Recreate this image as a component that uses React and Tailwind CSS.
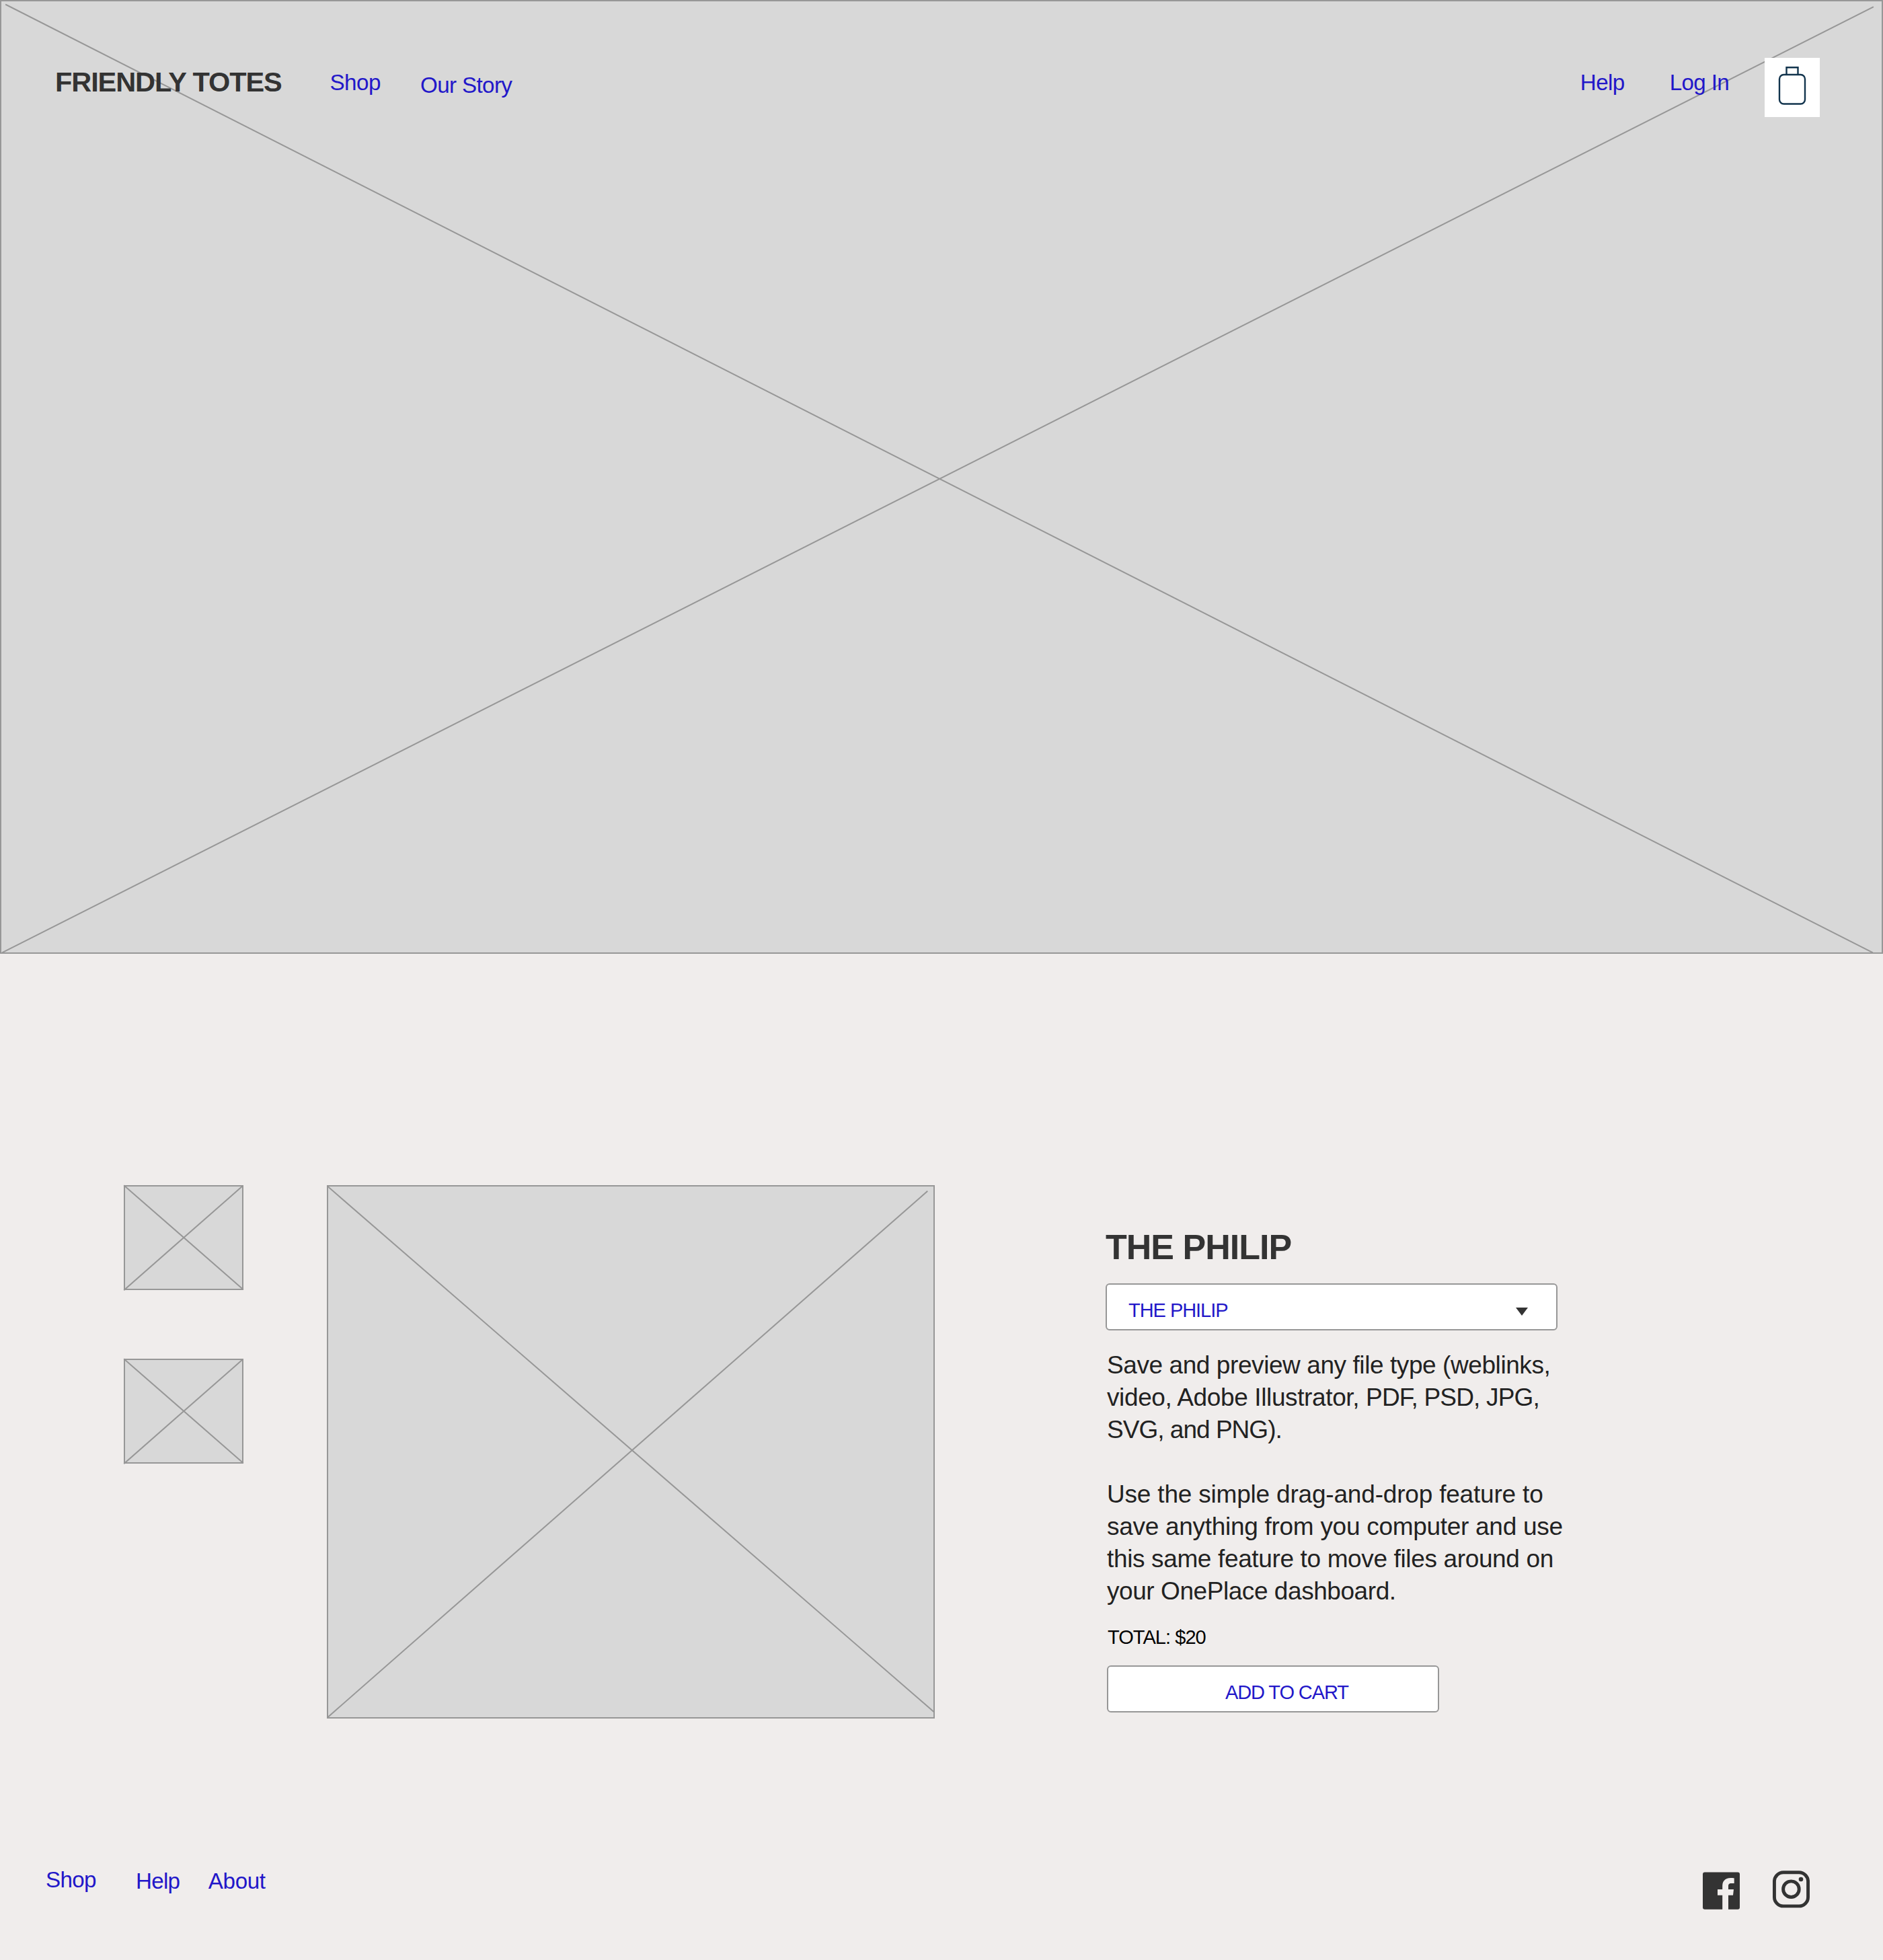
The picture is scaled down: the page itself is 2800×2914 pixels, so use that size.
function Placeholder({ width, height, lines, className }) {
  return (
    <div className={`relative shrink-0 border-2 border-[#979797] bg-[#d8d8d8] ${className}`}>
      <svg
        className="pointer-events-none absolute -left-0.5 -top-0.5 overflow-visible"
        width={width}
        height={height}
        viewBox={`0 0 ${width} ${height}`}
        fill="none"
        stroke="#979797"
        strokeWidth="2"
        strokeLinecap="square"
        aria-hidden="true"
      >
        {lines.map((d) => (
          <path key={d} d={d} />
        ))}
      </svg>
    </div>
  );
}

function NavLink({ children, className }) {
  return (
    <a href="#" className={`block whitespace-nowrap text-[33.2px] leading-10 text-[#2217c9] ${className}`}>
      {children}
    </a>
  );
}

function BagIcon() {
  return (
    <svg width="82" height="88" viewBox="0 0 82 88" fill="none" stroke="#12344d" strokeWidth="2.400" aria-hidden="true">
      <rect x="22" y="25" width="38" height="43.500" rx="6.500" />
      <path d="M32.500 25V14.200h17v10.800" />
    </svg>
  );
}

function FacebookIcon() {
  return (
    <svg width="55" height="56" viewBox="0 0 55 56" fill="#333" aria-hidden="true">
      <path d="M3 .5H52a3 3 0 0 1 3 3V52.700a3 3 0 0 1-3 3H38V34.700h7l1-8.700h-8v-4.500c0-3 1-4.500 4.200-4.500h4.500V9.300C45.500 9.100 43.300 9 41.500 9 34 9 29.200 13.300 29.200 20.500V26H22v8.700h7.200v21H3a3 3 0 0 1-3-3V3.500a3 3 0 0 1 3-3z" />
    </svg>
  );
}

function InstagramIcon() {
  return (
    <svg width="55" height="56" viewBox="0 0 55 56" fill="none" stroke="#333" strokeWidth="4.900" aria-hidden="true">
      <rect x="2.450" y="2.800" width="50.100" height="50.100" rx="13.500" />
      <circle cx="27.400" cy="27.700" r="11.800" />
      <circle cx="42" cy="13" r="3.300" fill="#333" stroke="none" />
    </svg>
  );
}

const thumbLines = ["M1 1 177 154.500", "M1 155.500 176.500 1.500"];

export default function App() {
  return (
    <div className="min-h-[2914px] w-[2800px] overflow-hidden bg-[#f0edec] font-['Liberation_Sans',Arial,sans-serif]">
      <header className="relative h-[1418px]">
        <div className="absolute inset-0">
          <Placeholder
            width={2800}
            height={1418}
            className="h-[1418px] w-[2800px]"
            lines={["M9 7 2784 1416", "M2785 10.500 4 1416"]}
          />
        </div>
        <nav className="relative flex items-start pl-[82px] pr-[94px] pt-[86px]">
          <h1 className="mt-4 whitespace-nowrap text-[41.5px] font-bold leading-10 tracking-[-1.097px] text-[#333]">
            FRIENDLY TOTES
          </h1>
          <NavLink className="ml-[71.7px] mt-[17px] tracking-[-0.527px]">Shop</NavLink>
          <NavLink className="ml-[59.3px] mt-[21px] tracking-[-0.649px]">Our Story</NavLink>
          <NavLink className="ml-auto mt-[17px] tracking-[-0.609px]">Help</NavLink>
          <NavLink className="ml-[67.1px] mt-[17px] tracking-[-0.653px]">Log In</NavLink>
          <button className="ml-[52.9px] h-[88px] w-[82px] shrink-0 bg-white" aria-label="Bag">
            <BagIcon />
          </button>
        </nav>
      </header>

      <main className="flex h-[1137px] items-start pl-[184px] pt-[344px]">
        <div className="flex flex-col gap-[102px]">
          <Placeholder width={178} height={156} className="h-[156px] w-[178px]" lines={thumbLines} />
          <Placeholder width={178} height={156} className="h-[156px] w-[178px]" lines={thumbLines} />
        </div>
        <Placeholder
          width={904}
          height={793}
          className="ml-[124px] h-[793px] w-[904px]"
          lines={["M2 2.500 902 782.500", "M892.500 9.500 2 790.500"]}
        />

        <section className="ml-[254px] w-[680px] pt-[62px]">
          <h2 className="whitespace-nowrap text-[52px] font-bold leading-[60px] tracking-[-0.992px] text-[#333]">
            THE PHILIP
          </h2>
          <div className="mt-6 flex h-[70px] w-[672px] items-center justify-between rounded-md border-2 border-[#979797] bg-white pl-8 pr-[42px] pt-2.5">
            <span className="text-[29px] leading-10 tracking-[-1.042px] text-[#2217c9]">THE PHILIP</span>
            <svg className="mt-1" width="18" height="12" viewBox="0 0 18 12" fill="#333" aria-hidden="true">
              <path d="M0 0h18L9 12z" />
            </svg>
          </div>

          <div className="ml-0.5 mt-7 whitespace-nowrap text-[37px] leading-[48px] text-[#222]">
            <p>
              <span className="block tracking-[-0.421px]">Save and preview any file type (weblinks,</span>
              <span className="block tracking-[-0.38px]">
                video, Adobe Illustrator, <span className="tracking-[-0.81px]">PDF, PSD, JPG,</span>
              </span>
              <span className="block tracking-[-0.98px]">SVG, and PNG).</span>
            </p>
            <p className="mt-12">
              <span className="block tracking-[-0.194px]">Use the simple drag-and-drop feature to</span>
              <span className="block tracking-[-0.289px]">save anything from you computer and use</span>
              <span className="block tracking-[-0.361px]">this same feature to move files around on</span>
              <span className="block tracking-[-0.44px]">your OnePlace dashboard.</span>
            </p>
          </div>

          <p className="ml-[3px] mt-6 text-[29px] leading-10 tracking-[-0.949px] text-black">TOTAL: $20</p>
          <button className="ml-0.5 mt-[22px] flex h-[70px] w-[494px] items-center rounded-md border-2 border-[#979797] bg-white pl-[174px] pt-2.5 text-[29px] leading-10 tracking-[-1.1px] text-[#2217c9]">
            ADD TO CART
          </button>
        </section>
      </main>

      <footer className="flex items-start pl-[68px] pr-[109px] pt-[219px]">
        <NavLink className="mt-px tracking-[-0.693px]">Shop</NavLink>
        <NavLink className="ml-[59.2px] mt-[3px] tracking-[-0.709px]">Help</NavLink>
        <NavLink className="ml-[42.5px] mt-[3px] tracking-[-0.387px]">About</NavLink>
        <a href="#" className="ml-auto mt-[9px]" aria-label="Facebook">
          <FacebookIcon />
        </a>
        <a href="#" className="ml-[49px] mt-[7px]" aria-label="Instagram">
          <InstagramIcon />
        </a>
      </footer>
    </div>
  );
}
